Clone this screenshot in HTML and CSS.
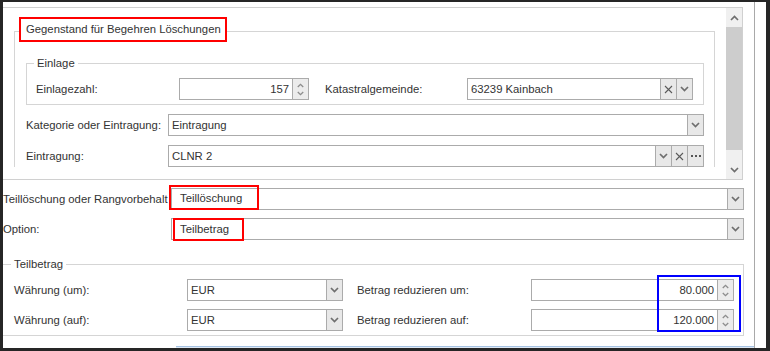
FILE: index.html
```html
<!DOCTYPE html>
<html lang="de">
<head>
    <meta charset="UTF-8">
    <meta name="viewport" content="width=device-width, initial-scale=1.0">
    <title>Gegenstand für Begehren Löschungen</title>
    <link rel="stylesheet" href="styles.css">
</head>
<body>

    <!-- Icon-Symbole -->
    <svg class="defs" width="0" height="0">
        <symbol id="i-down" viewBox="0 0 9 6"><path d="M1 1l3.5 3.5L8 1" fill="none" stroke="#6e6e6e" stroke-width="1.7"/></symbol>
        <symbol id="i-up" viewBox="0 0 9 6"><path d="M1 5l3.5-3.5L8 5" fill="none" stroke="#6e6e6e" stroke-width="1.7"/></symbol>
        <symbol id="i-x" viewBox="0 0 9 9"><path d="M1 1l7 7M8 1L1 8" fill="none" stroke="#5a5a5a" stroke-width="1.1"/></symbol>
        <symbol id="i-dots" viewBox="0 0 10 2"><rect x="0" width="2" height="2" fill="#555"/><rect x="4" width="2" height="2" fill="#555"/><rect x="8" width="2" height="2" fill="#555"/></symbol>
    </svg>

    <div class="window">
        <div class="main">

            <!-- Oberer Bereich mit Scrollbar -->
            <div class="scroller">
                <div class="scroll-content">
                    <div class="group group-main">
                        <div class="caption caption-marked">Gegenstand für Begehren Löschungen</div>

                        <div class="group group-einlage">
                            <div class="caption">Einlage</div>
                            <div class="row row-first">
                                <span class="lbl lbl-einlagezahl">Einlagezahl:</span>
                                <div class="field field-einlagezahl num">
                                    <span class="value">157</span>
                                    <span class="btn spin">
                                        <svg class="ic-spin"><use href="#i-up"/></svg>
                                        <svg class="ic-spin"><use href="#i-down"/></svg>
                                    </span>
                                </div>
                                <span class="lbl lbl-kg">Katastralgemeinde:</span>
                                <div class="field field-kg">
                                    <span class="value">63239 Kainbach</span>
                                    <span class="btn"><svg class="ic-x"><use href="#i-x"/></svg></span>
                                    <span class="btn"><svg class="ic-down"><use href="#i-down"/></svg></span>
                                </div>
                            </div>
                        </div>

                        <div class="row">
                            <span class="lbl lbl-main">Kategorie oder Eintragung:</span>
                            <div class="field grow">
                                <span class="value">Eintragung</span>
                                <span class="btn"><svg class="ic-down"><use href="#i-down"/></svg></span>
                            </div>
                        </div>

                        <div class="row">
                            <span class="lbl lbl-main">Eintragung:</span>
                            <div class="field grow">
                                <span class="value">CLNR 2</span>
                                <span class="btn"><svg class="ic-down"><use href="#i-down"/></svg></span>
                                <span class="btn"><svg class="ic-x"><use href="#i-x"/></svg></span>
                                <span class="btn"><svg class="ic-dots"><use href="#i-dots"/></svg></span>
                            </div>
                        </div>
                    </div>
                </div>

                <div class="scrollbar">
                    <span class="sb-arrow"><svg class="ic-down"><use href="#i-up"/></svg></span>
                    <span class="sb-thumb"></span>
                    <span class="sb-track"></span>
                    <span class="sb-arrow"><svg class="ic-down"><use href="#i-down"/></svg></span>
                </div>
            </div>

            <!-- Auswahl -->
            <div class="row row-wide">
                <span class="lbl lbl-wide">Teillöschung oder Rangvorbehalt</span>
                <div class="field grow">
                    <span class="value marked"><span class="mark mark-teil">Teillöschung</span></span>
                    <span class="btn"><svg class="ic-down"><use href="#i-down"/></svg></span>
                </div>
            </div>

            <div class="row row-wide">
                <span class="lbl lbl-wide">Option:</span>
                <div class="field grow">
                    <span class="value marked"><span class="mark mark-option">Teilbetrag</span></span>
                    <span class="btn"><svg class="ic-down"><use href="#i-down"/></svg></span>
                </div>
            </div>

            <!-- Teilbetrag -->
            <div class="group group-betrag">
                <div class="caption">Teilbetrag</div>

                <div class="row row-first">
                    <span class="lbl lbl-waehrung">Währung (um):</span>
                    <div class="field field-waehrung">
                        <span class="value">EUR</span>
                        <span class="btn"><svg class="ic-down"><use href="#i-down"/></svg></span>
                    </div>
                    <span class="lbl lbl-betrag">Betrag reduzieren um:</span>
                    <div class="field field-betrag num">
                        <span class="value">80.000</span>
                        <span class="btn spin">
                            <svg class="ic-spin"><use href="#i-up"/></svg>
                            <svg class="ic-spin"><use href="#i-down"/></svg>
                        </span>
                    </div>
                </div>

                <div class="row row-betrag">
                    <span class="lbl lbl-waehrung">Währung (auf):</span>
                    <div class="field field-waehrung">
                        <span class="value">EUR</span>
                        <span class="btn"><svg class="ic-down"><use href="#i-down"/></svg></span>
                    </div>
                    <span class="lbl lbl-betrag">Betrag reduzieren auf:</span>
                    <div class="field field-betrag num">
                        <span class="value">120.000</span>
                        <span class="btn spin">
                            <svg class="ic-spin"><use href="#i-up"/></svg>
                            <svg class="ic-spin"><use href="#i-down"/></svg>
                        </span>
                    </div>
                </div>

                <!-- Markierung der Beträge -->
                <div class="mark-blue"></div>
            </div>

            <div class="strip"></div>
        </div>
    </div>

</body>
</html>
```

FILE: styles.css
```css
* {
    box-sizing: border-box;
}

body {
    margin: 0;
    font-family: "Liberation Sans", Arial, sans-serif;
    font-size: 11.3px;
    color: #333;
    background: #fff;
}

.defs {
    display: block;
}

.window {
    width: 770px;
    height: 351px;
    border-style: solid;
    border-color: #262626;
    border-width: 2px 4px 3px 3px;
    overflow: hidden;
}

.main {
    width: 752px;
    height: 100%;
    padding: 5px 10px 0 0;
    border-right: 1px solid #a9a9a9;
    overflow: hidden;
}

/* Scrollbereich */
.scroller {
    display: flex;
    width: 740px;
    height: 173px;
    border-top: 1px solid #d0d0d0;
    border-right: 1px solid #d0d0d0;
    border-bottom: 1px solid #d0d0d0;
}

.scroll-content {
    flex: 1;
    overflow: hidden;
}

.scrollbar {
    width: 16px;
    display: flex;
    flex-direction: column;
    background: #f0f0f0;
}

.sb-arrow {
    height: 19px;
    display: flex;
    align-items: center;
    justify-content: center;
}

.sb-thumb {
    height: 123px;
    background: #cdcdcd;
}

.sb-track {
    flex: 1;
}

/* Gruppen */
.group {
    border: 1px solid #d5d5d5;
}

.caption {
    width: fit-content;
    margin-top: -8px;
    padding: 0 3px;
    line-height: 14px;
    white-space: nowrap;
    background: #fff;
}

.group-main {
    margin: 23px 11px 0;
    padding: 0 10px 0 11px;
    border-bottom: none;
}

.caption-marked {
    width: 208px;
    height: 25px;
    margin: -15px 0 0 -7px;
    padding: 0 5px;
    line-height: 21px;
    border: 2px solid #f00;
}

.group-einlage {
    margin-top: 21px;
    padding: 0 10px 4px 9px;
}

.group-einlage .caption {
    margin-left: -2px;
}

.group-betrag {
    position: relative;
    margin-top: 24px;
    padding: 0 9px 4px 11px;
    border-left: none;
}

.group-betrag .caption {
    margin-left: -3px;
}

/* Zeilen */
.row {
    display: flex;
    align-items: center;
    height: 22px;
    margin-top: 9px;
}

.row-first {
    margin-top: 8px;
}

.row-wide {
    margin-top: 8px;
}

.row-betrag {
    margin-top: 8px;
}

.lbl {
    flex: none;
    white-space: nowrap;
}

.lbl-einlagezahl { width: 143px; }
.lbl-kg { width: 142px; margin-left: 16px; }
.lbl-main { width: 142px; }
.lbl-wide { width: 168px; }
.lbl-waehrung { width: 173px; }
.lbl-betrag { width: 174px; margin-left: 14px; }

/* Eingabefelder */
.field {
    display: flex;
    height: 22px;
    border: 1px solid #ababab;
    background: #fff;
}

.field .value {
    flex: 1;
    padding: 0 3px;
    line-height: 20px;
    white-space: nowrap;
    overflow: hidden;
}

.field.num .value {
    text-align: right;
}

.grow { flex: 1; }
.field-einlagezahl { width: 130px; }
.field-kg { width: 226px; }
.field-waehrung { width: 156px; }
.field-betrag { width: 203px; }

.btn {
    flex: none;
    width: 16px;
    display: flex;
    align-items: center;
    justify-content: center;
    border-left: 1px solid #ababab;
    background: #e8e8e8;
}

.spin {
    flex-direction: column;
    gap: 3px;
    background: #ececec;
}

.ic-down {
    width: 9px;
    height: 6px;
}

.ic-spin {
    width: 7px;
    height: 5px;
    opacity: 0.75;
}

.ic-x {
    width: 9px;
    height: 9px;
}

.ic-dots {
    width: 10px;
    height: 2px;
}

/* Markierungen */
.value.marked {
    display: flex;
    align-items: flex-start;
    padding: 0;
    overflow: visible;
}

.mark {
    flex: none;
    border: 2px solid #f00;
}

.mark-teil {
    width: 90px;
    height: 25px;
    margin: -4px 0 0 -3px;
    padding-left: 9px;
    line-height: 22px;
}

.mark-option {
    width: 71px;
    height: 23px;
    margin: -1px 0 0 1px;
    padding-left: 5px;
    line-height: 19px;
}

.mark-blue {
    position: absolute;
    left: 654px;
    top: 10px;
    width: 84px;
    height: 57px;
    border: 2px solid #00f;
}

.strip {
    height: 2px;
    margin: 10px -10px 0 173px;
    border-top: 1px solid #a6c3e3;
    background: #dde8f5;
}
```
